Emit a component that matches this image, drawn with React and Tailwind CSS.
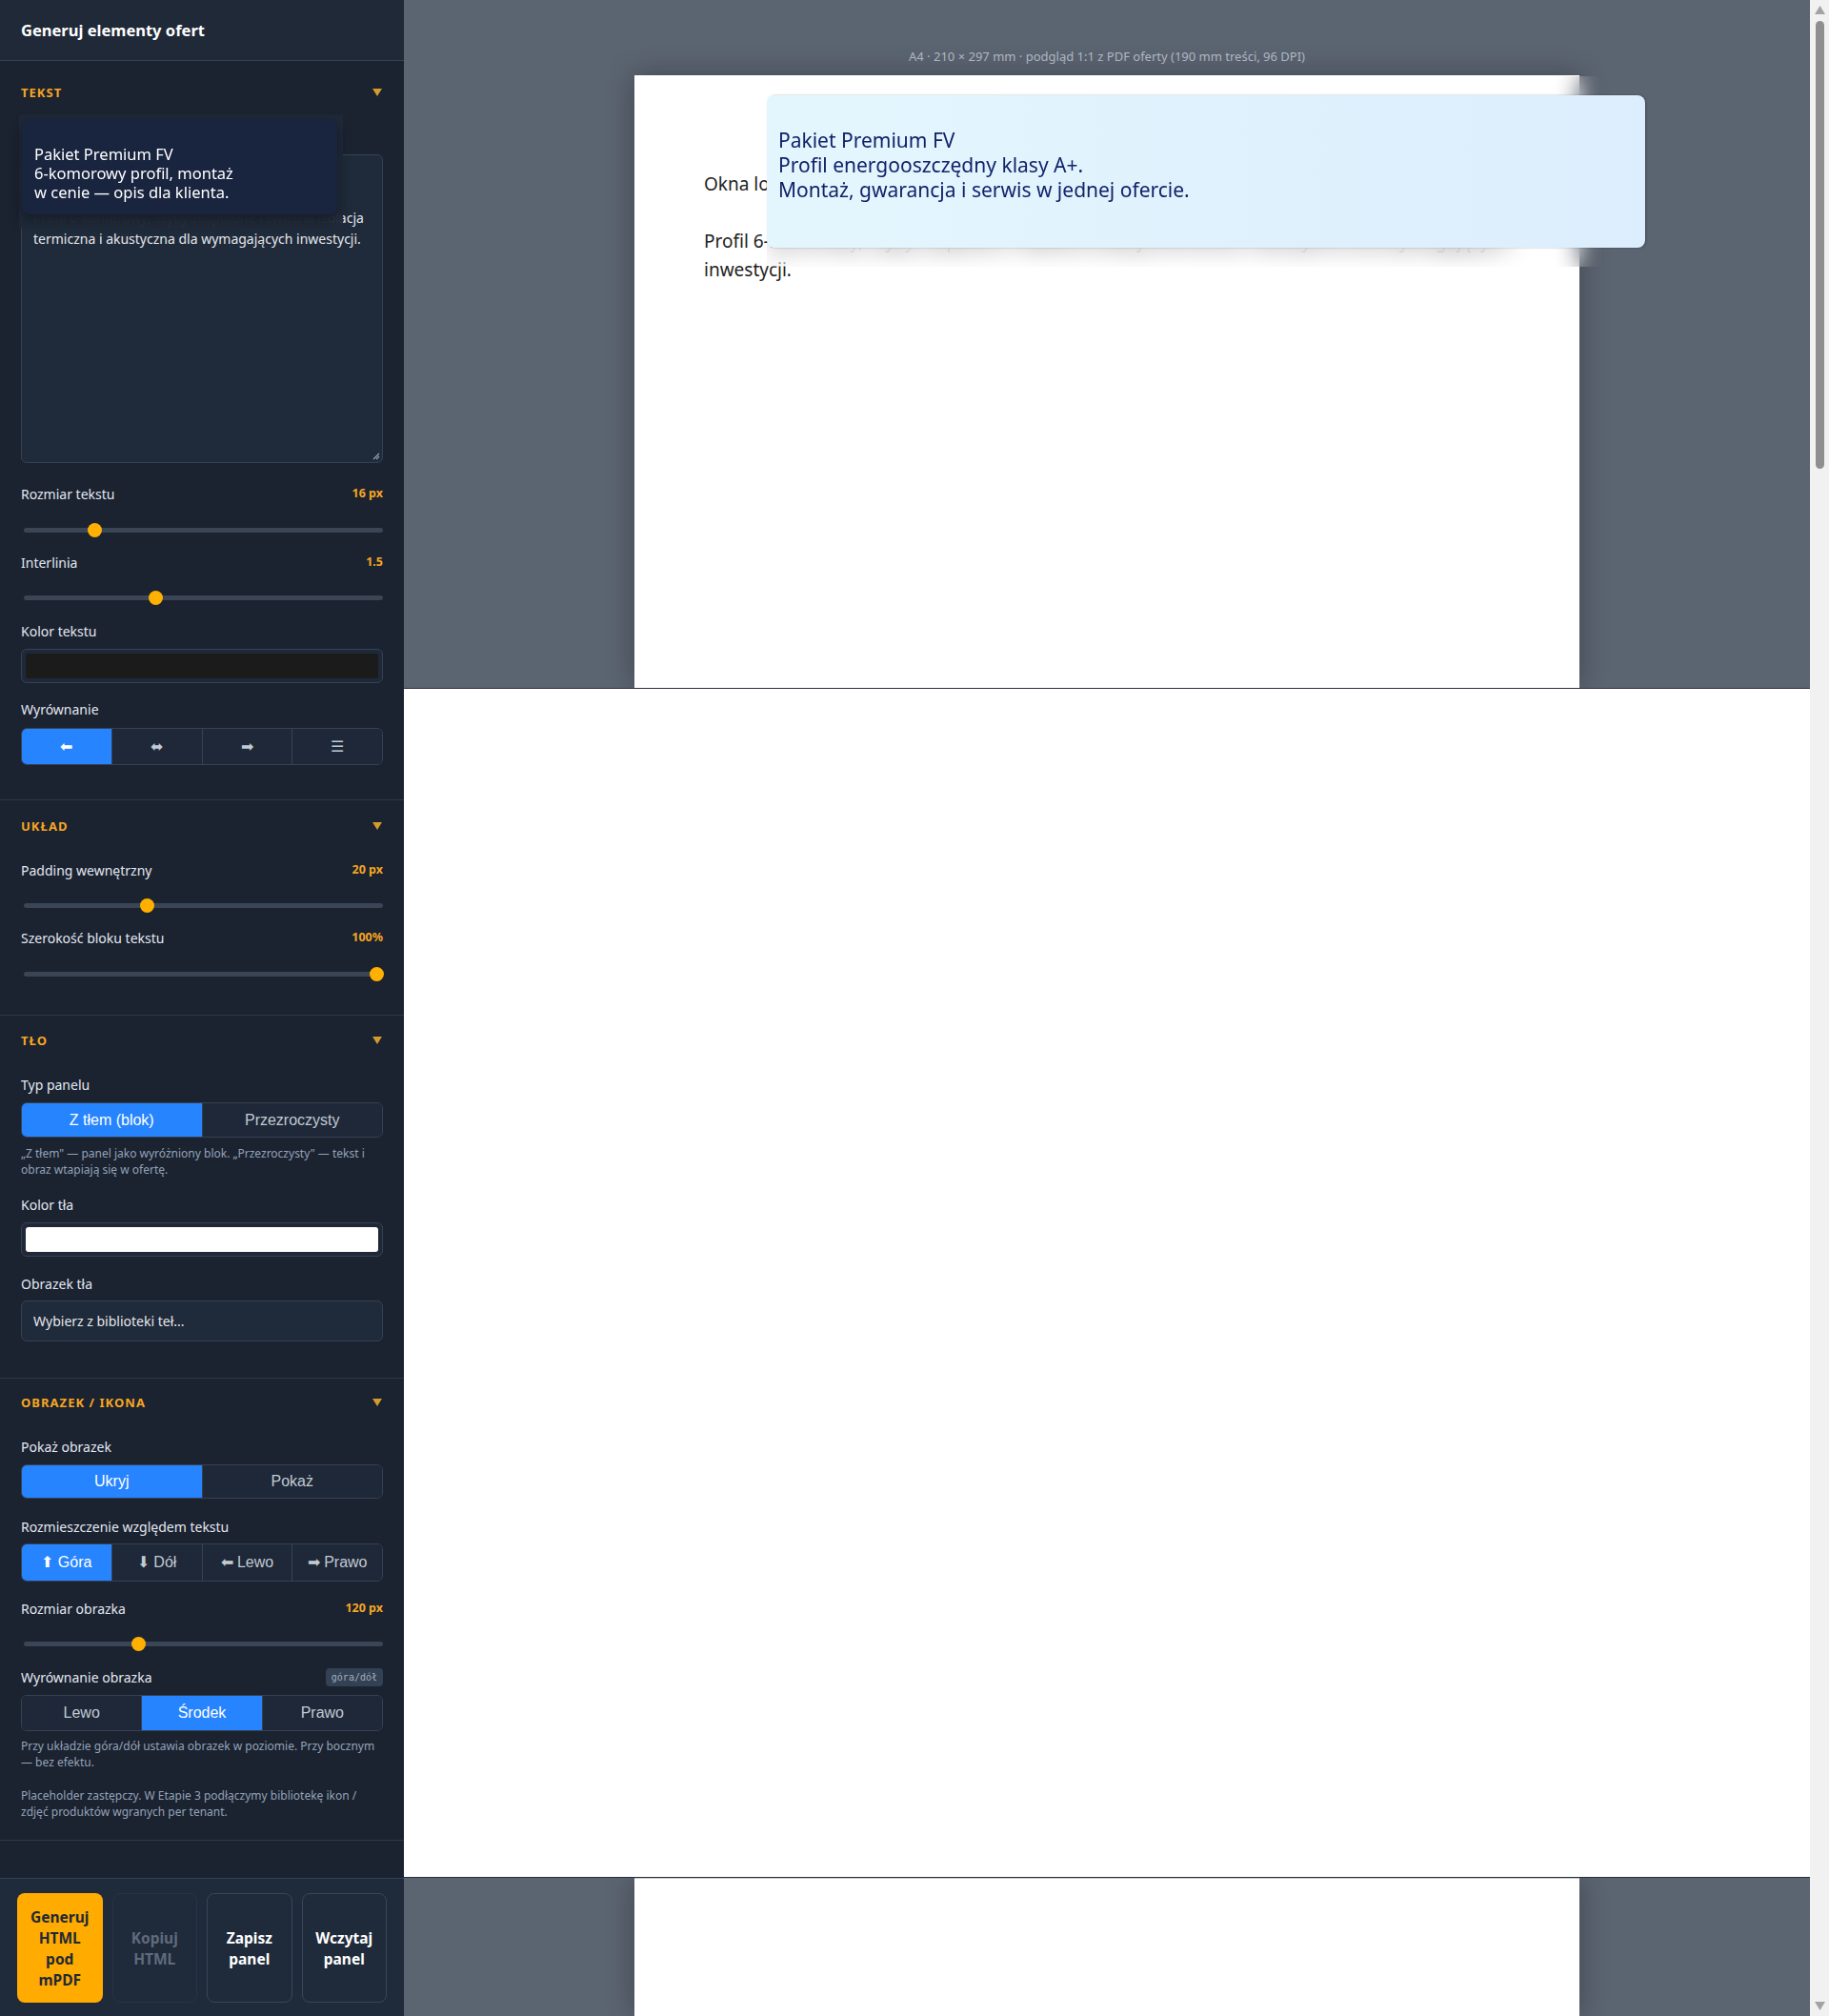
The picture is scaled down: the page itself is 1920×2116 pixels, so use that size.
// Generator elementów ofert — panel ustawień po lewej, podgląd strony A4 po prawej

function SectionHead({ title }) {
  return (
    <div className="flex h-[18px] items-center justify-between">
      <span className="text-[13px] font-bold uppercase tracking-[0.08em] text-[#f5a623]">{title}</span>
      <svg width="10" height="8" viewBox="0 0 10 8" className="mr-[1px] -mt-[3px]">
        <polygon points="0,0 10,0 5,8" fill="#d39a2c" />
      </svg>
    </div>
  );
}

function FieldLabel({ children, value, badge, className = '' }) {
  return (
    <div className={`flex h-[20px] items-center justify-between ${className}`}>
      <span className="text-[14px] text-[#e2e8f0]">{children}</span>
      {value && <span className="text-[12.5px] font-bold text-[#f5a623]">{value}</span>}
      {badge && (
        <span className="flex h-[19px] items-center rounded-[4px] bg-[#334155] px-[6px] font-['DejaVu_Sans_Mono',monospace] text-[10px] text-[#a3acb9]">
          {badge}
        </span>
      )}
    </div>
  );
}

function Slider({ thumb, className = '' }) {
  return (
    <div className={`relative flex h-[20px] items-center ${className}`}>
      <div className="ml-[3px] h-[5px] w-[379px] rounded-full bg-[#3a4556]" />
      <div className={`absolute top-[2.5px] h-[15px] w-[15px] rounded-full bg-[#ffb000] ${thumb}`} />
    </div>
  );
}

function Segmented({ items, active, className = '' }) {
  return (
    <div className={`flex overflow-hidden rounded-[6px] border border-[#364152] ${className}`}>
      {items.map((it, i) => (
        <div
          key={i}
          className={`flex flex-1 items-center justify-center font-['Liberation_Sans',Arial,sans-serif] text-[16px] ${i ? 'border-l border-[#364152]' : ''} ${i === active ? 'bg-[#2684ff] text-white' : 'bg-[#1e2838] text-[#c2c9d3]'}`}
        >
          {it}
        </div>
      ))}
    </div>
  );
}

function ColorField({ swatch, className = '' }) {
  return (
    <div className={`h-[36px] rounded-[6px] border border-[#364152] bg-[#1e2838] p-[4px] ${className}`}>
      <div className={`h-full w-full rounded-[3px] ${swatch}`} />
    </div>
  );
}

function Hint({ children, className = '' }) {
  return <p className={`whitespace-nowrap text-[12px] leading-[17px] text-[#94a3b8] ${className}`}>{children}</p>;
}

function Sidebar() {
  return (
    <aside className="flex h-[2116px] w-[424px] shrink-0 flex-col bg-[#1b2230]">
      <header className="flex h-[64px] shrink-0 items-center border-b border-[#334155] bg-[#1f2937] px-[22px]">
        <h1 className="mt-[2px] text-[16.5px] font-bold text-white">Generuj elementy ofert</h1>
      </header>

      {/* TEKST */}
      <section className="relative border-b border-[#2e3848] px-[22px] pt-[25px] pb-[36px]">
        <SectionHead title="Tekst" />
        <div className="relative mt-[55px] h-[324px] rounded-[6px] border border-[#364152] bg-[#1f2a3a] px-[12px] pt-[11px] text-[14px] leading-[22px] text-[#e5e7eb]">
          <div>Okna lorem ipsum dla domu.</div>
          <div className="h-[22px]" />
          <div className="whitespace-nowrap">Profil 6-komorowy, szyby zespolone i świetna izolacja</div>
          <div className="whitespace-nowrap">termiczna i akustyczna dla wymagających inwestycji.</div>
          <svg width="8" height="8" viewBox="0 0 8 8" className="absolute right-[2px] bottom-[2px]">
            <path d="M7 1 L1 7 M7 4 L4 7" stroke="#9aa3af" strokeWidth="1.2" />
          </svg>
        </div>
        <FieldLabel value="16 px" className="mt-[22px]">Rozmiar tekstu</FieldLabel>
        <Slider thumb="left-[70px]" className="mt-[18px]" />
        <FieldLabel value="1.5" className="mt-[14px]">Interlinia</FieldLabel>
        <Slider thumb="left-[134px]" className="mt-[17px]" />
        <FieldLabel className="mt-[15px]">Kolor tekstu</FieldLabel>
        <ColorField swatch="bg-[#1b1b1b]" className="mt-[9px]" />
        <FieldLabel className="mt-[17px]">Wyrównanie</FieldLabel>
        <Segmented className="mt-[10px] h-[39px]" active={0} items={['⬅', '⬌', '➡', '☰']} />

        {/* podpowiedź nad polem treści */}
        <div className="absolute top-[56px] left-[20px] h-[120px] w-[340px] bg-[#1f2938]/90 backdrop-blur-[12px]" />
        <div className="absolute top-[61px] left-[23px] h-[100px] w-[331px] rounded-[8px] bg-[#19243f] pt-[27px] pl-[13px] text-[16.5px] leading-[20px] text-white shadow-[0_6px_14px_rgba(0,0,0,0.35)]">
          Pakiet Premium FV
          <br />
          6-komorowy profil, montaż
          <br />w cenie — opis dla klienta.
        </div>
      </section>

      {/* UKŁAD */}
      <section className="border-b border-[#2e3848] px-[22px] pt-[19px] pb-[33px]">
        <SectionHead title="Układ" />
        <FieldLabel value="20 px" className="mt-[26px]">Padding wewnętrzny</FieldLabel>
        <Slider thumb="left-[125px]" className="mt-[17px]" />
        <FieldLabel value="100%" className="mt-[14px]">Szerokość bloku tekstu</FieldLabel>
        <Slider thumb="left-[366px]" className="mt-[18px]" />
      </section>

      {/* TŁO */}
      <section className="border-b border-[#2e3848] px-[22px] pt-[18px] pb-[38px]">
        <SectionHead title="Tło" />
        <FieldLabel className="mt-[26px]">Typ panelu</FieldLabel>
        <Segmented className="mt-[9px] h-[37px]" active={0} items={['Z tłem (blok)', 'Przezroczysty']} />
        <Hint className="mt-[8px]">
          „Z tłem" — panel jako wyróżniony blok. „Przezroczysty" — tekst i
          <br />
          obraz wtapiają się w ofertę.
        </Hint>
        <FieldLabel className="mt-[18px]">Kolor tła</FieldLabel>
        <ColorField swatch="bg-white" className="mt-[9px]" />
        <FieldLabel className="mt-[18px]">Obrazek tła</FieldLabel>
        <div className="mt-[8px] flex h-[43px] items-center rounded-[6px] border border-[#364152] bg-[#1f2a3a] pl-[12px] text-[14px] text-[#e5e7eb]">
          Wybierz z biblioteki teł...
        </div>
      </section>

      {/* OBRAZEK / IKONA */}
      <section className="border-b border-[#2e3848] px-[22px] pt-[17px] pb-[21px]">
        <SectionHead title="Obrazek / ikona" />
        <FieldLabel className="mt-[26px]">Pokaż obrazek</FieldLabel>
        <Segmented className="mt-[9px] h-[36px]" active={0} items={['Ukryj', 'Pokaż']} />
        <FieldLabel className="mt-[19px]">Rozmieszczenie względem tekstu</FieldLabel>
        <Segmented className="mt-[8px] h-[40px]" active={0} items={['⬆ Góra', '⬇ Dół', '⬅ Lewo', '➡ Prawo']} />
        <FieldLabel value="120 px" className="mt-[18px]">Rozmiar obrazka</FieldLabel>
        <Slider thumb="left-[116px]" className="mt-[17px]" />
        <FieldLabel badge="góra/dół" className="mt-[15px]">Wyrównanie obrazka</FieldLabel>
        <Segmented className="mt-[9px] h-[38px]" active={1} items={['Lewo', 'Środek', 'Prawo']} />
        <Hint className="mt-[7px]">
          Przy układzie góra/dół ustawia obrazek w poziomie. Przy bocznym
          <br />— bez efektu.
        </Hint>
        <Hint className="mt-[18px]">
          Placeholder zastępczy. W Etapie 3 podłączymy bibliotekę ikon /
          <br />
          zdjęć produktów wgranych per tenant.
        </Hint>
      </section>

      <div className="flex-1" />

      <footer className="grid h-[145px] shrink-0 grid-cols-4 gap-[10px] border-t border-[#334155] bg-[#1f2a3a] px-[18px] pt-[15px] pb-[14px]">
        <button className="flex items-center justify-center rounded-[8px] bg-[#ffab00] text-[15.5px] leading-[22px] font-bold text-[#1f2937]">
          Generuj
          <br />
          HTML
          <br />
          pod
          <br />
          mPDF
        </button>
        <button className="flex items-center justify-center rounded-[8px] border border-[#283344] text-[15.5px] leading-[22px] font-bold text-[#5f6b7c]">
          Kopiuj
          <br />
          HTML
        </button>
        <button className="flex items-center justify-center rounded-[8px] border border-[#3a4657] text-[15.5px] leading-[22px] font-bold text-white">
          Zapisz
          <br />
          panel
        </button>
        <button className="flex items-center justify-center rounded-[8px] border border-[#3a4657] text-[15.5px] leading-[22px] font-bold text-white">
          Wczytaj
          <br />
          panel
        </button>
      </footer>
    </aside>
  );
}

function Preview() {
  return (
    <main className="flex min-w-0 flex-1 flex-col">
      <div className="flex h-[723px] shrink-0 flex-col items-center overflow-hidden border-b border-[#27303b] bg-[#5b6471]">
        <div className="mt-[51px] h-[16px] text-[13px] leading-[16px] text-[#b4bcc7]">
          A4 · 210 × 297 mm · podgląd 1:1 z PDF oferty (190 mm treści, 96 DPI)
        </div>
        <div className="relative mt-[12px] w-[992px] flex-1 bg-white pt-[99px] pl-[73px] text-[19px] leading-[30px] text-[#222] shadow-[0_0_28px_rgba(0,0,0,0.3)]">
          <p className="whitespace-nowrap">Okna lorem ipsum dla domu.</p>
          <p className="mt-[30px] whitespace-nowrap">
            Profil 6-komorowy, szyby zespolone i świetna izolacja termiczna i akustyczna dla wymagających
            <br />
            inwestycji.
          </p>

          {/* panel nałożony na stronę */}
          <div className="absolute top-[1px] left-[139px] h-[200px] w-[879px] backdrop-blur-[12px]" />
          <div className="absolute top-[21px] left-[139px] h-[160px] w-[922px] rounded-[8px] bg-gradient-to-r from-[#e4f6fd] to-[#dcedfd] pt-[34px] pl-[12px] text-[21px] leading-[26px] text-[#10236a] shadow-[1px_0_2px_rgba(0,0,0,0.35)]">
            Pakiet Premium FV
            <br />
            Profil energooszczędny klasy A+.
            <br />
            Montaż, gwarancja i serwis w jednej ofercie.
          </div>
        </div>
      </div>

      <div className="h-[1247px] shrink-0 bg-white" />

      <div className="flex flex-1 justify-center overflow-hidden border-t border-[#27303b] bg-[#5b6471]">
        <div className="w-[992px] border-t border-[#c8c8c8] bg-white shadow-[0_0_28px_rgba(0,0,0,0.3)]" />
      </div>
    </main>
  );
}

function Scrollbar() {
  return (
    <div className="relative h-[2116px] w-[20px] shrink-0 bg-[#f1f1f1]">
      <svg width="11" height="9" viewBox="0 0 11 9" className="absolute top-[6px] left-[5px]">
        <polygon points="5.5,0 11,9 0,9" fill="#a3a3a3" />
      </svg>
      <div className="absolute top-[22px] left-[6px] h-[470px] w-[9px] rounded-full bg-[#8f8f8f]" />
      <svg width="11" height="9" viewBox="0 0 11 9" className="absolute bottom-[6px] left-[5px]">
        <polygon points="0,0 11,0 5.5,9" fill="#a3a3a3" />
      </svg>
    </div>
  );
}

export default function App() {
  return (
    <div className="flex h-[2116px] w-[1920px] overflow-hidden bg-white font-['Noto_Sans',sans-serif]">
      <Sidebar />
      <Preview />
      <Scrollbar />
    </div>
  );
}
